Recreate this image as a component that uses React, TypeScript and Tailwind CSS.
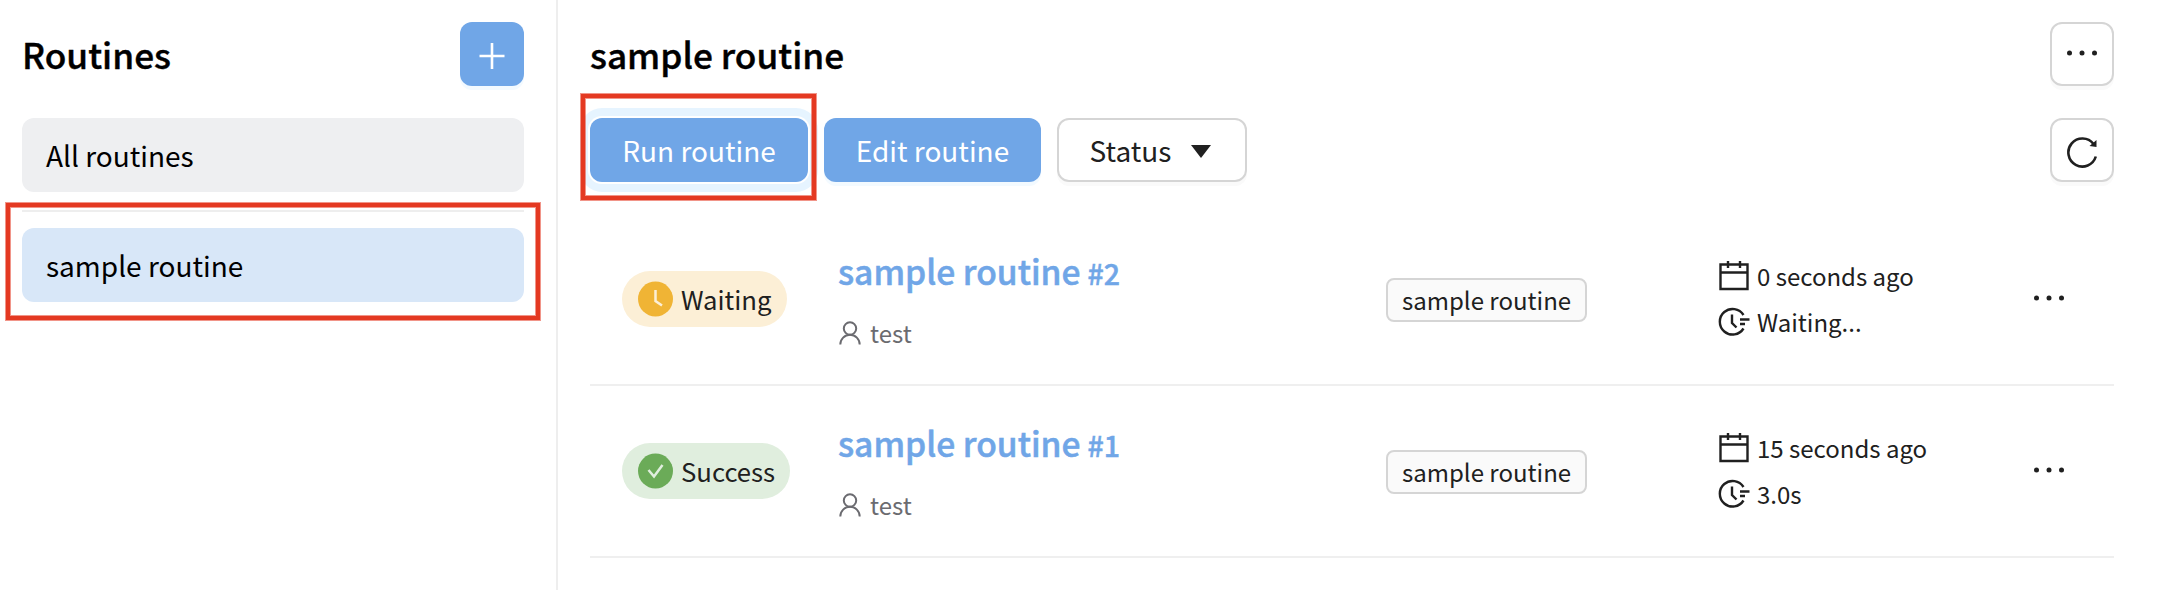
import React from "react";

const rows = [
  { id: 2, status: "waiting", label: "Waiting", time: "0 seconds ago", duration: "Waiting..." },
  { id: 1, status: "success", label: "Success", time: "15 seconds ago", duration: "3.0s" },
];

function Dots() {
  return (
    <svg width="32" height="8" viewBox="0 0 32 8" fill="#202020">
      <circle cx="3.5" cy="4" r="2.5" />
      <circle cx="16" cy="4" r="2.5" />
      <circle cx="28.5" cy="4" r="2.5" />
    </svg>
  );
}

function StatusPill({ status, label }: { status: string; label: string }) {
  const waiting = status === "waiting";
  return (
    <div className={`flex h-14 items-center rounded-full pr-[15px] pl-4 ${waiting ? "bg-[#fcefd6]" : "bg-[#e0eede]"}`}>
      <svg width="35" height="36" viewBox="0 0 35 36" fill="none" strokeWidth="2.5">
        <circle cx="17.5" cy="18" r="17.5" fill={waiting ? "#f0b435" : "#6bab58"} />
        {waiting ? <path d="M17.5 9v11l6.5 4.5" stroke="#fcefd6" /> : <path d="M10.5 17l5.5 6.5 8.500-11.500" stroke="#e0eede" />}
      </svg>
      <span className="ml-2 text-[25.7px] text-[#202020]">{label}</span>
    </div>
  );
}

export default function App() {
  return (
    <div className="relative flex h-[590px] w-[2160px] overflow-hidden bg-white font-['Noto_Sans_CJK_JP',sans-serif] leading-none text-black">
      <aside className="flex w-[558px] shrink-0 flex-col border-r-2 border-[#eeeeee] pt-[22px] pr-8 pl-[22px]">
        <div className="flex h-16 items-center justify-between">
          <h1 className="text-[35.2px] font-medium [-webkit-text-stroke:0.4px_#000]">Routines</h1>
          <button className="flex size-16 items-center justify-center rounded-xl bg-[#70a6e7] pt-1 shadow-[0_4px_0_#f3faff]">
            <svg width="26" height="26" viewBox="0 0 26 26" stroke="#fff" strokeWidth="2.6">
              <path d="M13 0v26M0.500 13h25" />
            </svg>
          </button>
        </div>
        <div className="mt-8 flex h-[74px] items-center rounded-xl bg-[#eeeff1] pl-6 text-[28px]">All routines</div>
        <div className="mt-[18px] h-0.5 bg-[#eeeeee]" />
        <div className="mt-4 flex h-[74px] items-center rounded-xl bg-[#d8e7f8] pl-6 text-[28px]">sample routine</div>
      </aside>
      <main className="flex-1 pt-[22px] pr-[46px] pl-8">
        <div className="flex h-16 items-center justify-between">
          <h2 className="text-[35.2px] font-medium [-webkit-text-stroke:0.4px_#000]">sample routine</h2>
          <button className="flex size-16 items-center justify-center rounded-xl border-2 border-[#d5d5d5] pr-px pb-[3px] shadow-[0_4px_0_#fafafa]">
            <Dots />
          </button>
        </div>
        <div className="mt-8 flex h-16 gap-4 text-[28px]">
          <button className="w-[218px] rounded-xl bg-[#70a6e7] text-white shadow-[0_0_0_2px_#fff,0_0_0_10px_#e6f4ff]">Run routine</button>
          <button className="w-[217px] rounded-xl bg-[#70a6e7] text-white shadow-[0_4px_0_#f3faff]">Edit routine</button>
          <button className="flex w-[190px] items-center justify-center gap-5 rounded-xl border-2 border-[#d5d5d5] pr-[3px] text-[#202020] shadow-[0_4px_0_#fafafa]">
            Status
            <svg className="mt-[3px]" width="20" height="13" viewBox="0 0 20 13" fill="#202020">
              <path d="M0 0h20L10 13z" />
            </svg>
          </button>
          <button className="ml-auto flex size-16 items-center justify-center rounded-xl border-2 border-[#d5d5d5] pt-[3px] shadow-[0_4px_0_#fafafa]">
            <svg width="32" height="32" viewBox="0 0 32 32" fill="none" stroke="#202020" strokeWidth="2.6">
              <path d="M29.800 20.500A14 14 0 1 1 27.500 8" />
              <path d="M30.500 4v7l-7-1z" fill="#202020" stroke="none" />
            </svg>
          </button>
        </div>
        <div className="mt-8">
          {rows.map((row) => (
            <div key={row.id} className="flex h-[172px] items-center border-b-2 border-[#efefef] pl-8 text-[#202020]">
              <div className="flex w-[216px]">
                <StatusPill status={row.status} label={row.label} />
              </div>
              <div className="w-[548px] pt-px">
                <div className="flex items-baseline font-medium text-[#70a6e7] [-webkit-text-stroke:0.5px_#70a6e7]">
                  <span className="text-[33.6px]">sample routine</span>
                  <span className="ml-[7px] text-[28.5px]">#{row.id}</span>
                </div>
                <div className="mt-[34px] flex items-center gap-[9px] pl-px text-[24px] text-[#6b6b70]">
                  <svg width="22" height="24" viewBox="0 0 22 24" fill="none" stroke="#6b6b70" strokeWidth="2">
                    <circle cx="11" cy="7.5" r="6.2" />
                    <path d="M1.300 23.500a9.700 9.700 0 0 1 19.400 0" />
                  </svg>
                  test
                </div>
              </div>
              <div className="flex w-[332px]">
                <div className="mt-px flex h-11 items-center rounded-lg border-2 border-[#d5d5d5] bg-[#fafafa] px-3.5 text-[24px]">sample routine</div>
              </div>
              <div className="flex w-[315px] flex-col gap-4 text-[24px]">
                <div className="flex h-[30px] items-center gap-[7px]">
                  <svg width="32" height="30" viewBox="0 0 32 30" fill="none" stroke="#202020" strokeWidth="2.4">
                    <path d="M2.500 3.500h27v24.500h-27zM2.500 11.500h27M10 0v7M22 0v7" />
                  </svg>
                  {row.time}
                </div>
                <div className="flex h-[30px] items-center gap-[7px]">
                  <svg width="32" height="30" viewBox="0 0 32 30" fill="none" stroke="#202020" strokeWidth="2.4">
                    <path d="M25.500 8A12.800 12.800 0 1 0 25.500 21.500M14 7.500v8.500l4.500 4.500M22 12.500h9.500M22 17h5" />
                  </svg>
                  {row.duration}
                </div>
              </div>
              <div className="pb-[3px]">
                <Dots />
              </div>
            </div>
          ))}
        </div>
      </main>
      <div className="absolute top-[203px] left-[6px] h-[117px] w-[534px] border-4 border-[#e43922] shadow-[0_0_0_1px_#e4392288,inset_0_0_0_1px_#e4392288]" />
      <div className="absolute top-[94px] left-[581px] h-[106px] w-[235px] border-4 border-[#e43922] shadow-[0_0_0_1px_#e4392288,inset_0_0_0_1px_#e4392288]" />
    </div>
  );
}
